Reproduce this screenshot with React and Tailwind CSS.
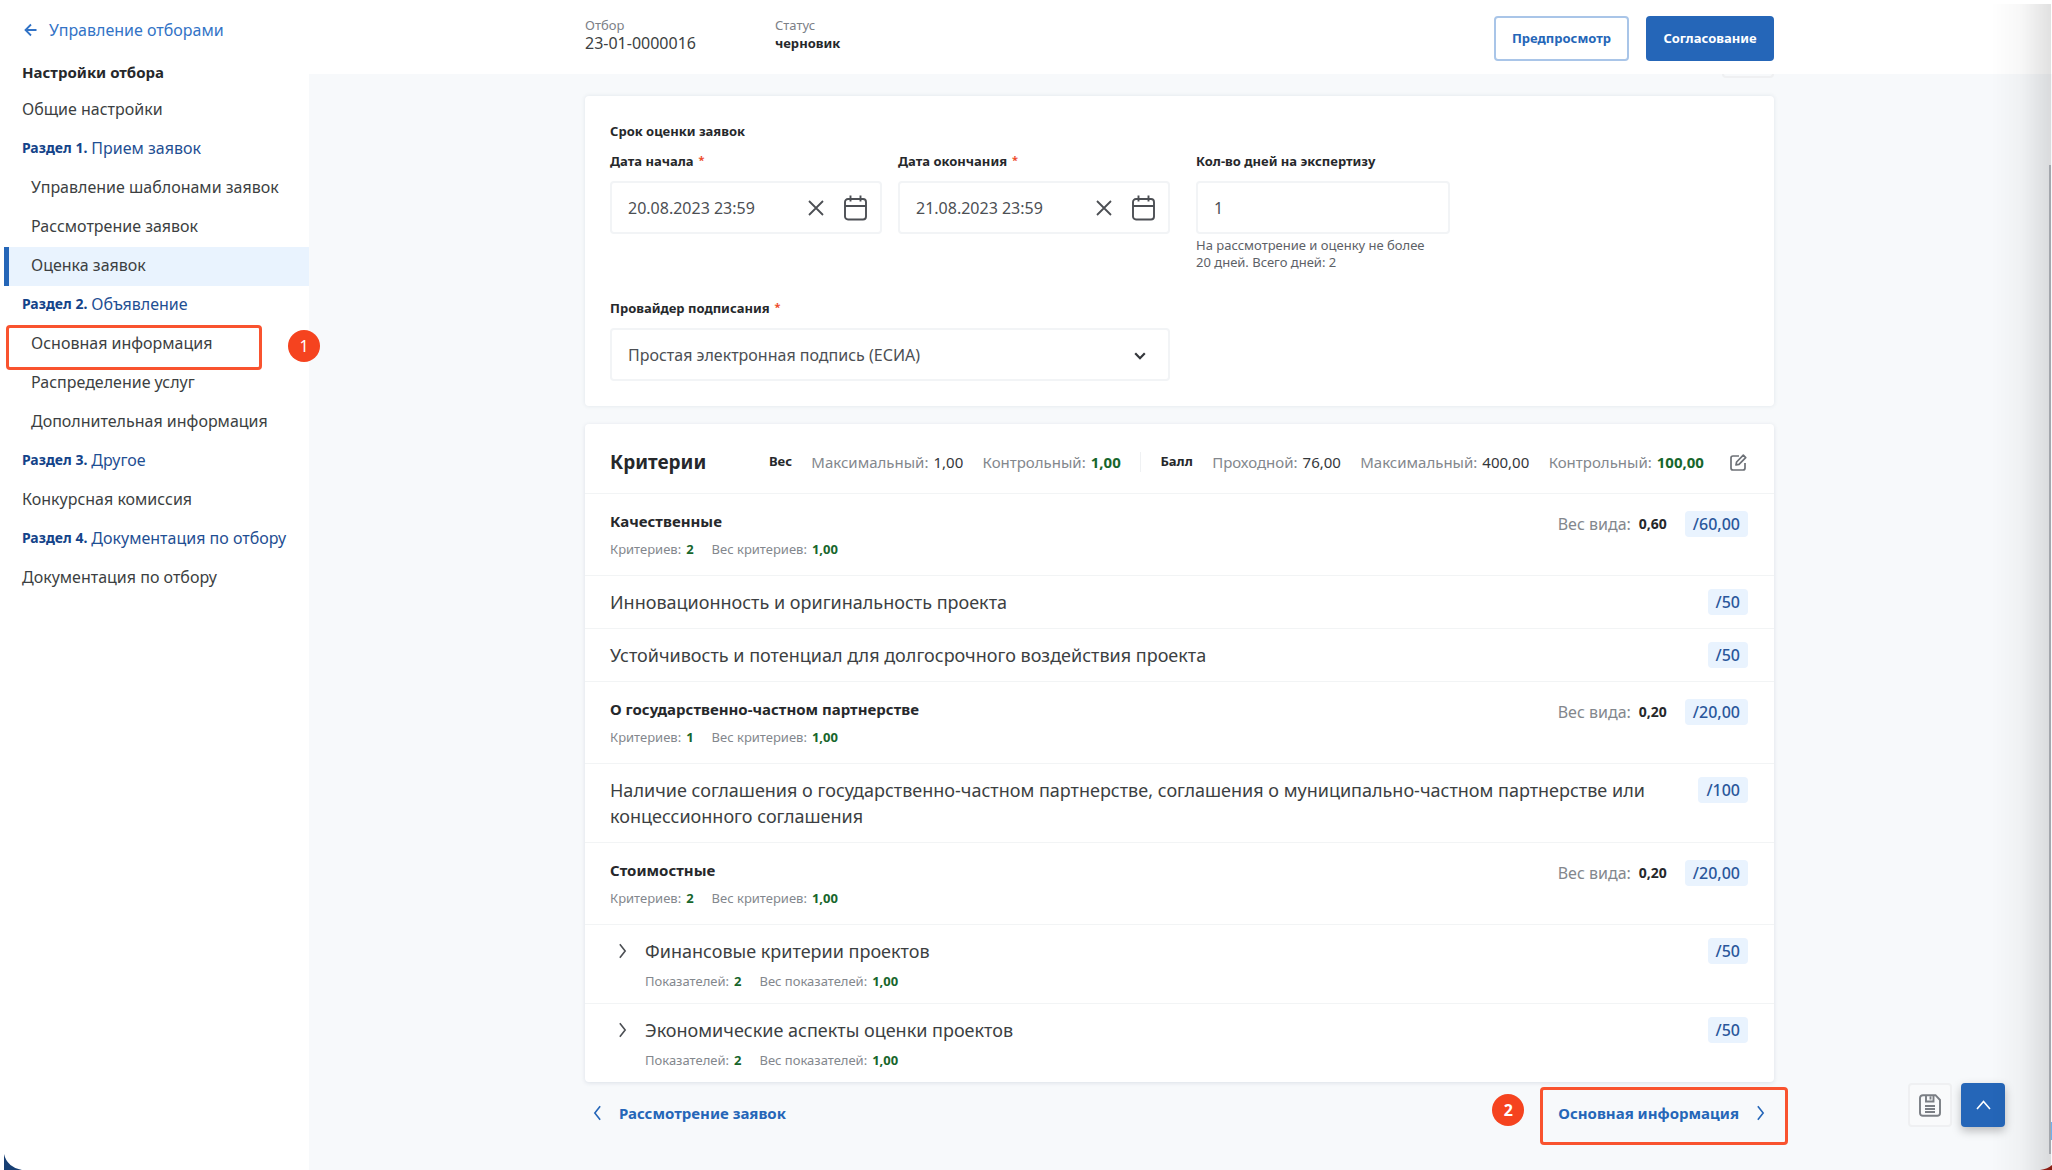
import React from "react";

const NAV = [
  { label: "Общие настройки" },
  { section: "Раздел 1.", label: "Прием заявок" },
  { label: "Управление шаблонами заявок", nested: true },
  { label: "Рассмотрение заявок", nested: true },
  { label: "Оценка заявок", nested: true, active: true },
  { section: "Раздел 2.", label: "Объявление" },
  { label: "Основная информация", nested: true, marked: true },
  { label: "Распределение услуг", nested: true },
  { label: "Дополнительная информация", nested: true },
  { section: "Раздел 3.", label: "Другое" },
  { label: "Конкурсная комиссия" },
  { section: "Раздел 4.", label: "Документация по отбору" },
  { label: "Документация по отбору" },
];

const CRITERIA = [
  { type: "group", title: "Качественные", count: "2", weight: "0,60", score: "/60,00" },
  { type: "item", title: "Инновационность и оригинальность проекта", score: "/50" },
  { type: "item", title: "Устойчивость и потенциал для долгосрочного воздействия проекта", score: "/50" },
  { type: "group", title: "О государственно-частном партнерстве", count: "1", weight: "0,20", score: "/20,00" },
  {
    type: "item",
    title:
      "Наличие соглашения о государственно-частном партнерстве, соглашения о муниципально-частном партнерстве или концессионного соглашения",
    score: "/100",
  },
  { type: "group", title: "Стоимостные", count: "2", weight: "0,20", score: "/20,00" },
  { type: "nested", title: "Финансовые критерии проектов", count: "2", score: "/50" },
  { type: "nested", title: "Экономические аспекты оценки проектов", count: "2", score: "/50" },
];

function Chevron({ dir, className }) {
  const paths = {
    left: "M7.5 1.5 1.5 9l6 7.5",
    right: "M1.5 1.5 7.5 9l-6 7.5",
  };
  return (
    <svg className={className} viewBox="0 0 9 18" fill="none" stroke="currentColor" strokeWidth="1.8" aria-hidden="true">
      <path d={paths[dir]} />
    </svg>
  );
}

function Marker({ children, className }) {
  return (
    <span className={`absolute flex size-8 items-center justify-center rounded-full bg-[#f5431f] text-base text-white ${className}`}>
      {children}
    </span>
  );
}

function NavItem({ item }) {
  let tone = "border-transparent text-[#3c3f42]";
  if (item.section) tone = "border-transparent text-[#1f4f93]";
  if (item.active) tone = "border-[#2566b8] bg-[#e9f3fe] text-[#3c3f42]";
  return (
    <li className="relative">
      <a href="#" className={`flex h-[39px] items-center gap-1 border-l-[5px] pb-[3px] text-base whitespace-nowrap ${tone} ${item.nested ? "pl-[22px]" : "pl-[13px]"}`}>
        {item.section && <b className="text-sm font-bold text-[#134389]">{item.section}</b>}
        {item.label}
      </a>
      {item.marked && (
        <>
          <span className="pointer-events-none absolute top-0 left-[2px] h-[45px] w-[256px] rounded-[4px] border-[3px] border-[#f9532f]" />
          <Marker className="top-[5px] left-[284px]">1</Marker>
        </>
      )}
    </li>
  );
}

function Sidebar() {
  return (
    <aside className="relative z-10 w-[309px] shrink-0 bg-white pt-[11px] pl-1">
      <a href="#" className="flex h-10 items-center gap-3 pb-[2px] pl-5 text-base text-[#3273c6]">
        <svg className="h-[14px] w-[13px]" viewBox="0 0 13 14" fill="none" stroke="currentColor" strokeWidth="1.8" aria-hidden="true">
          <path d="M12.5 7H1.5M7 1.5 1.5 7 7 12.5" />
        </svg>
        Управление отборами
      </a>
      <h2 className="mt-1 flex h-9 items-center pb-[2px] pl-[18px] text-[15px] font-bold text-[#26282b]">Настройки отбора</h2>
      <nav>
        <ul>
          {NAV.map((item, i) => (
            <NavItem key={i} item={item} />
          ))}
        </ul>
      </nav>
    </aside>
  );
}

function TopBar() {
  return (
    <header className="relative z-10 h-[74px] bg-white pr-[2px]">
      <div className="mx-auto flex max-w-[1189px] items-start pt-4">
        <div className="w-[190px]">
          <p className="text-[13px] leading-[18px] text-[#7c8087]">Отбор</p>
          <p className="text-base leading-[18px] text-[#3c3f42]">23-01-0000016</p>
        </div>
        <div>
          <p className="text-[13px] leading-[18px] text-[#7c8087]">Статус</p>
          <p className="text-[13px] leading-[18px] font-bold text-[#26282b]">черновик</p>
        </div>
        <div className="ml-auto flex gap-[17px]">
          <button className="h-[45px] w-[135px] rounded-[4px] border-2 border-[#a9c5e8] text-[13px] font-bold text-[#2566b8]">Предпросмотр</button>
          <button className="h-[45px] w-[128px] rounded-[4px] bg-[#2566b8] text-[13px] font-bold text-white">Согласование</button>
        </div>
      </div>
    </header>
  );
}

const LABEL = "mb-[9px] flex h-5 items-center gap-[5px] text-[13px] font-bold text-[#26282b]";
const FIELD = "h-[53px] w-full rounded-[4px] border-2 border-[#f2f4f6] bg-white pl-4 text-base text-[#4c4f54]";

function Star() {
  return <span className="-mt-1 text-[11px] text-[#ee4b2b]">*</span>;
}

function DateField({ id, label, value }) {
  return (
    <div>
      <label htmlFor={id} className={LABEL}>
        {label} <Star />
      </label>
      <div className="relative">
        <input id={id} type="text" defaultValue={value} className={FIELD} />
        <div className="absolute inset-y-0 right-[15px] flex items-center gap-5 text-[#4c4f54]">
          <button aria-label="Очистить">
            <svg className="size-4" viewBox="0 0 16 16" fill="none" stroke="currentColor" strokeWidth="1.8">
              <path d="m1 1 14 14M15 1 1 15" />
            </svg>
          </button>
          <button aria-label="Открыть календарь">
            <svg className="h-[26px] w-[23px]" viewBox="0 0 23 26" fill="none" stroke="currentColor" strokeWidth="1.9">
              <rect x="1" y="4" width="21" height="20.5" rx="3" />
              <path d="M1 11h21M6.5 .5v6M16.5 .5v6" />
            </svg>
          </button>
        </div>
      </div>
    </div>
  );
}

function TermsCard() {
  return (
    <section className="rounded-[4px] bg-white p-[25px] shadow-[0_0_4px_rgba(60,80,110,0.12)]">
      <h3 className="mb-[11px] text-[13px] leading-5 font-bold text-[#26282b]">Срок оценки заявок</h3>
      <div className="flex flex-wrap gap-x-[26px]">
        <div className="grid w-[560px] grid-cols-2 gap-4">
          <DateField id="start" label="Дата начала" value="20.08.2023 23:59" />
          <DateField id="end" label="Дата окончания" value="21.08.2023 23:59" />
        </div>
        <div className="w-[254px]">
          <label htmlFor="days" className={LABEL}>
            Кол-во дней на экспертизу
          </label>
          <input id="days" type="text" defaultValue="1" className={FIELD} />
          <p className="mt-[3px] text-[13px] leading-[17px] whitespace-nowrap text-[#5d6167]">
            На рассмотрение и оценку не более
            <br />
            20 дней. Всего дней: 2
          </p>
        </div>
      </div>
      <div className="mt-7 w-[560px]">
        <label htmlFor="provider" className={LABEL}>
          Провайдер подписания <Star />
        </label>
        <div className="relative">
          <select id="provider" className={`appearance-none ${FIELD}`}>
            <option>Простая электронная подпись (ЕСИА)</option>
          </select>
          <svg className="pointer-events-none absolute top-6 right-6 h-2 w-3 text-[#34373b]" viewBox="0 0 12 8" fill="none" stroke="currentColor" strokeWidth="2.2" aria-hidden="true">
            <path d="m1.2 1.2 4.8 5 4.8-5" />
          </svg>
        </div>
      </div>
    </section>
  );
}

function Stat({ name, value, good }) {
  return (
    <span className="flex gap-[5px]">
      <span className="text-[#83878d]">{name}:</span>
      <span className={good ? "font-bold text-[#17662c]" : "text-[#34373b]"}>{value}</span>
    </span>
  );
}

function Badge({ children }) {
  return <span className="flex h-[26px] shrink-0 items-center rounded-[4px] bg-[#e9f3fe] px-2 text-base font-medium text-[#2a579b]">{children}</span>;
}

function SubStats({ kind, count }) {
  const names = kind === "nested" ? ["Показателей", "Вес показателей"] : ["Критериев", "Вес критериев"];
  return (
    <p className="flex gap-[18px] text-[13px] leading-5 text-[#83878d]">
      <span className="flex gap-[5px]">
        {names[0]}: <b className="font-bold text-[#17662c]">{count}</b>
      </span>
      <span className="flex gap-[5px]">
        {names[1]}: <b className="font-bold text-[#17662c]">1,00</b>
      </span>
    </p>
  );
}

function Row({ row }) {
  if (row.type === "group") {
    return (
      <li className="flex justify-between border-b border-[#f2f4f5] pt-[17px] pr-[26px] pb-4 pl-[25px]">
        <div>
          <h4 className="mb-2 text-[15px] leading-5 font-bold text-[#26282b]">{row.title}</h4>
          <SubStats kind="group" count={row.count} />
        </div>
        <div className="flex h-[26px] items-center text-base">
          <span className="mr-2 text-[#83878d]">Вес вида:</span>
          <b className="mr-[18px] text-sm font-bold text-[#26282b]">{row.weight}</b>
          <Badge>{row.score}</Badge>
        </div>
      </li>
    );
  }
  if (row.type === "item") {
    return (
      <li className="flex items-start justify-between gap-10 border-b border-[#f2f4f5] py-[13px] pr-[26px] pl-[25px] text-lg leading-[26px] text-[#3c3f42]">
        {row.title}
        <Badge>{row.score}</Badge>
      </li>
    );
  }
  return (
    <li className="flex items-start border-b border-[#f2f4f5] pt-[13px] pr-[26px] pb-3 pl-[25px] last:border-b-0">
      <button aria-label="Развернуть" className="flex h-[26px] w-[35px] items-center pl-2 text-[#4c4f54]">
        <Chevron dir="right" className="h-4 w-[9px]" />
      </button>
      <div className="grow">
        <h5 className="mb-[7px] text-lg leading-[26px] text-[#3c3f42]">{row.title}</h5>
        <SubStats kind="nested" count={row.count} />
      </div>
      <Badge>{row.score}</Badge>
    </li>
  );
}

function CriteriaCard() {
  return (
    <section className="mt-[18px] rounded-[4px] bg-white shadow-[0_1px_4px_rgba(60,80,110,0.14)]">
      <div className="flex h-[70px] items-center border-b border-[#f2f4f5] pt-[7px] pr-[27px] pl-[25px] text-[15px] whitespace-nowrap">
        <h2 className="w-[159px] text-[19px] font-bold text-[#26282b]">Критерии</h2>
        <div className="flex grow items-center justify-between">
          <b className="text-[13px] font-bold text-[#26282b]">Вес</b>
          <Stat name="Максимальный" value="1,00" />
          <Stat name="Контрольный" value="1,00" good />
          <span className="h-5 w-px bg-[#eff1f3]" />
          <b className="text-[13px] font-bold text-[#26282b]">Балл</b>
          <Stat name="Проходной" value="76,00" />
          <Stat name="Максимальный" value="400,00" />
          <Stat name="Контрольный" value="100,00" good />
        </div>
        <button aria-label="Редактировать" className="ml-[26px] text-[#6d7177]">
          <svg className="size-[17px]" viewBox="0 0 17 17" fill="none" stroke="currentColor" strokeWidth="1.7" strokeLinejoin="round">
            <path d="M9 2H3Q1 2 1 4v10q0 2 2 2h10q2 0 2-2V9" />
            <path d="m6 11 .6-3L13.3 1.2l2.4 2.4L9 10.4 6 11Z" />
          </svg>
        </button>
      </div>
      <ul>
        {CRITERIA.map((row, i) => (
          <Row key={i} row={row} />
        ))}
      </ul>
    </section>
  );
}

function StepLinks() {
  return (
    <div className="flex items-center justify-between pt-[5px] pr-[9px] pl-2 text-[15px] font-bold text-[#2566b8]">
      <a href="#" className="flex h-[52px] items-center gap-[17px]">
        <Chevron dir="left" className="h-4 w-[9px]" />
        Рассмотрение заявок
      </a>
      <a href="#" className="relative flex h-[52px] items-center gap-[17px]">
        Основная информация
        <Chevron dir="right" className="h-4 w-[9px]" />
        <span className="pointer-events-none absolute top-0 -right-[23px] -left-[18px] h-[58px] rounded-[4px] border-[3px] border-[#f9532f]" />
        <Marker className="top-[7px] -left-[66px]">2</Marker>
      </a>
    </div>
  );
}

function FloatingActions() {
  return (
    <div className="fixed right-[47px] bottom-[43px] z-20 flex gap-[9px]">
      <button aria-label="Сохранить" className="flex size-11 items-center justify-center rounded-[4px] border-2 border-[#eff0f2] bg-[#f9fafb] text-[#7a7e84]">
        <svg className="h-[23px] w-[22px]" viewBox="0 0 22 23" fill="none" stroke="currentColor" strokeWidth="1.9">
          <path d="M4 1.2h12.5L21 6v13q0 2.8-2.8 2.8H4Q1 21.8 1 19V4Q1 1.2 4 1.2ZM7 1.2v6.3h7.5V1.2M11.5 2.5v3M6 12h10M6 15h10M6 18h10" />
        </svg>
      </button>
      <button aria-label="Наверх" className="flex size-11 items-center justify-center rounded-[4px] bg-[#2566b8] text-white shadow-[0_4px_10px_rgba(0,0,0,0.25)]">
        <svg className="h-[10px] w-[15px]" viewBox="0 0 15 10" fill="none" stroke="currentColor" strokeWidth="1.6">
          <path d="M1 9 7.5 1.5 14 9" />
        </svg>
      </button>
    </div>
  );
}

function WindowEdges() {
  return (
    <div className="pointer-events-none" aria-hidden="true">
      <div className="fixed top-1 right-px bottom-0 z-20 w-[60px] bg-linear-to-r from-transparent via-black/3 to-black/12" />
      <div className="fixed top-[165px] right-px bottom-4 z-20 w-[2px] bg-[#a3a7ad]" />
      <svg className="fixed bottom-0 left-1 z-20 h-4 w-[18px]" viewBox="0 0 18 16">
        <path d="M0 0Q3 13 18 16H0Z" fill="#173f73" />
      </svg>
      <svg className="fixed right-0 bottom-0 z-20 h-[5px] w-3" viewBox="0 0 12 5">
        <path d="M12 0Q8 4 0 5h12Z" fill="#8c1c12" />
      </svg>
      <div className="fixed right-0 bottom-[30px] z-20 h-[18px] w-px bg-[#6fb1ee]" />
    </div>
  );
}

export default function App() {
  return (
    <div className="flex min-h-screen bg-[#f7f9fb] font-['Noto_Sans','Open_Sans',sans-serif]">
      <Sidebar />
      <div className="min-w-0 grow">
        <TopBar />
        <div className="pr-[2px]">
          <main className="mx-auto max-w-[1189px]">
            <div className="mb-[18px] ml-auto h-1 w-[52px] rounded-b-[4px] border-2 border-t-0 border-[#eff0f2]" />
            <TermsCard />
            <CriteriaCard />
            <StepLinks />
          </main>
        </div>
      </div>
      <FloatingActions />
      <WindowEdges />
    </div>
  );
}
